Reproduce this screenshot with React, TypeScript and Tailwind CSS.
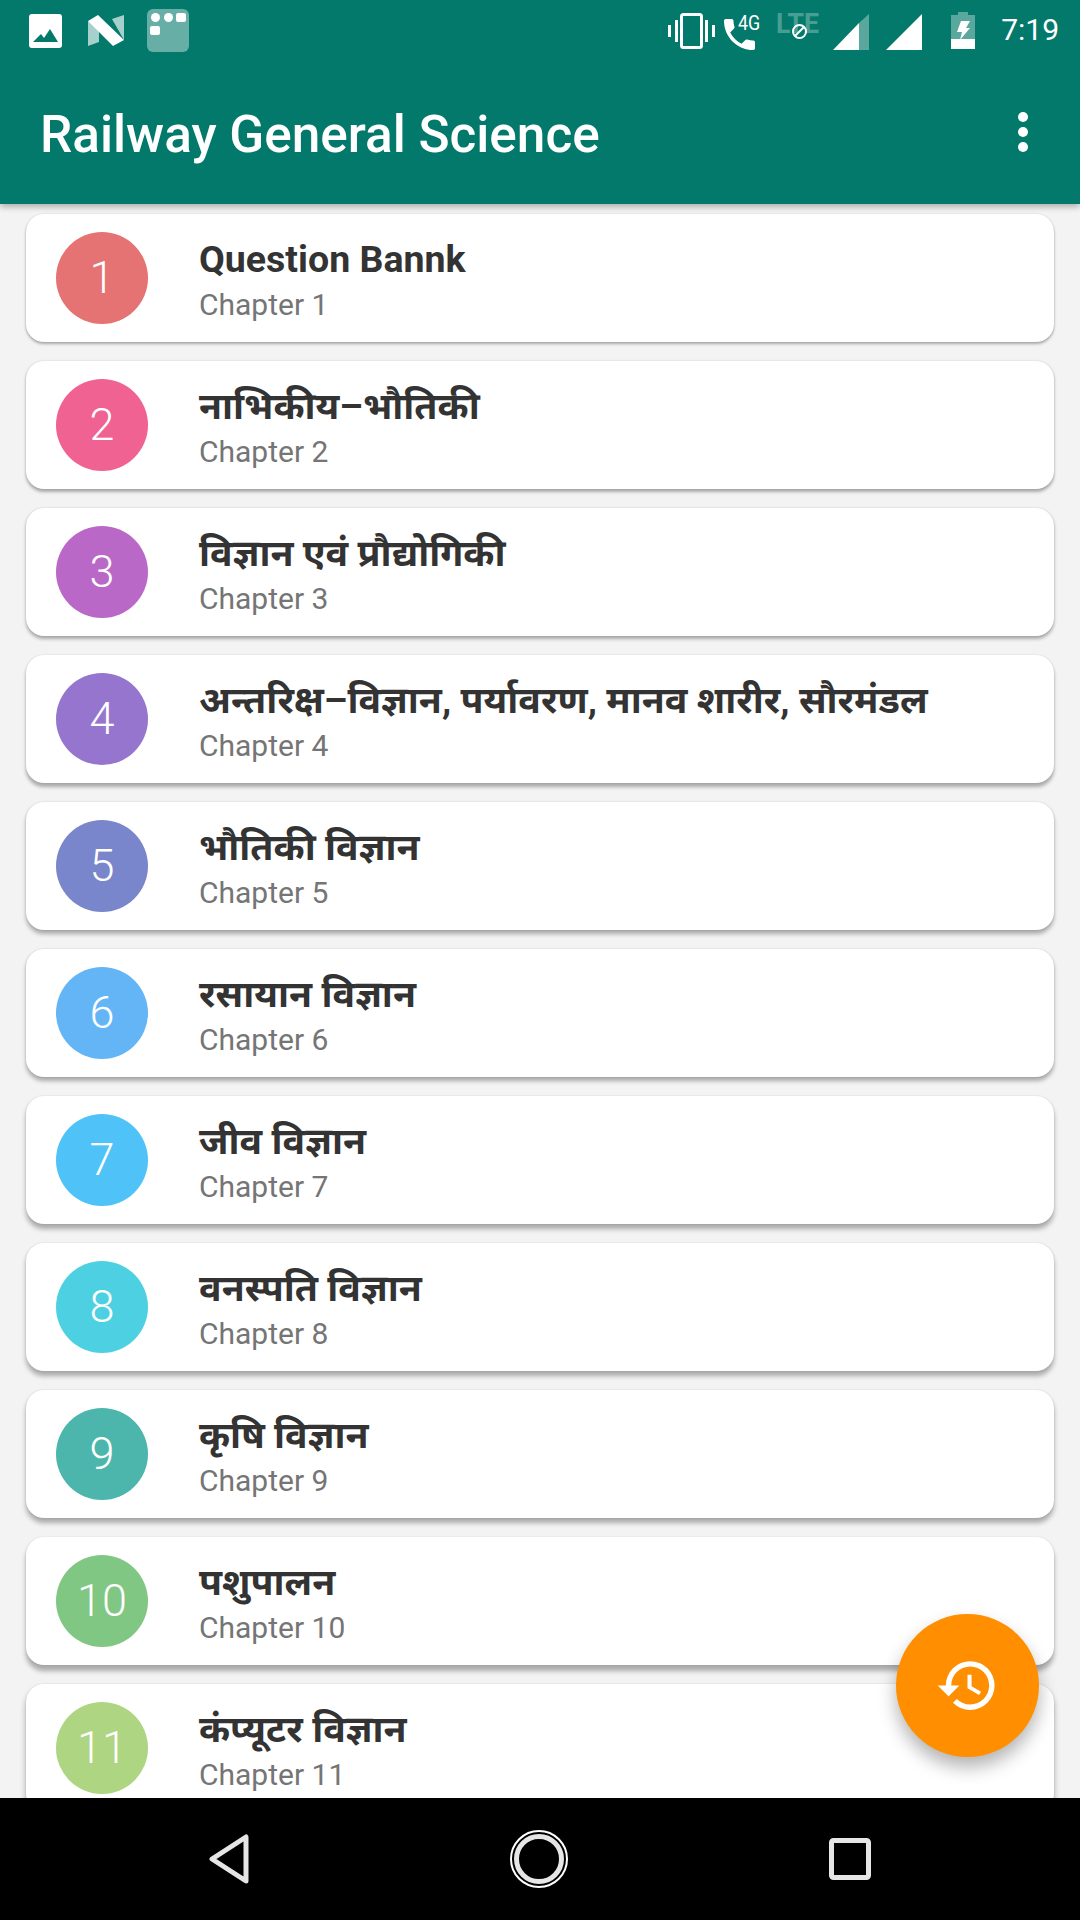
import React from 'react';
import { MdHistory } from 'react-icons/md';

const chapters = [
  { title: 'Question Bannk', color: 'bg-[#e57373]' },
  { title: 'नाभिकीय–भौतिकी', color: 'bg-[#f06292]' },
  { title: 'विज्ञान एवं प्रौद्योगिकी', color: 'bg-[#ba68c8]' },
  { title: 'अन्तरिक्ष–विज्ञान, पर्यावरण, मानव शारीर, सौरमंडल', color: 'bg-[#9575cd]' },
  { title: 'भौतिकी विज्ञान', color: 'bg-[#7986cb]' },
  { title: 'रसायान विज्ञान', color: 'bg-[#64b5f6]' },
  { title: 'जीव विज्ञान', color: 'bg-[#4fc3f7]' },
  { title: 'वनस्पति विज्ञान', color: 'bg-[#4dd0e1]' },
  { title: 'कृषि विज्ञान', color: 'bg-[#4db6ac]' },
  { title: 'पशुपालन', color: 'bg-[#81c784]' },
  { title: 'कंप्यूटर विज्ञान', color: 'bg-[#aed581]' },
];

const StatusBar = () => (
  <div className="flex h-[75px] items-start text-white">
    {/* notification icons */}
    <div className="flex items-start pl-[29px] pt-[9px]">
      <svg width="33" height="34" viewBox="0 0 33 34" className="mt-[5px]">
        <path fillRule="evenodd" fill="#fff" d="M3 0h27a3 3 0 0 1 3 3v28a3 3 0 0 1-3 3H3a3 3 0 0 1-3-3V3a3 3 0 0 1 3-3zM4 28h25l-8-13-6 9-3-4z" />
      </svg>
      <svg width="36" height="31" viewBox="0 0 36 31" className="ml-[26px] mt-[6px]">
        <path fill="#fff" fillOpacity="0.65" d="M0 6l11 6v15L0 31z" />
        <path fill="#fff" fillOpacity="0.65" d="M24 4l12-4v25z" />
        <path fill="#fff" d="M0 6L10 0l26 25-11 6z" />
      </svg>
      <div className="relative ml-[23px] h-[43px] w-[42px] rounded-[6px] bg-white/40">
        <span className="absolute left-[4px] top-[4px] h-[9px] w-[9px] rounded-full bg-white" />
        <span className="absolute left-[17px] top-[4px] h-[9px] w-[9px] rounded-full bg-white" />
        <span className="absolute right-[3px] top-[4px] h-[9px] w-[10px] rounded-[2px] bg-white" />
        <span className="absolute left-[3px] top-[17px] h-[9px] w-[10px] rounded-[2px] bg-white" />
      </div>
    </div>

    {/* system icons */}
    <div className="ml-auto flex items-start pr-[21px] pt-[12px]">
      <svg width="47" height="36" viewBox="0 0 47 36" className="mt-[1px]">
        <rect x="13.5" y="1.5" width="20" height="33" rx="2" fill="none" stroke="#fff" strokeWidth="3" />
        <path fill="#fff" d="M7 7h3v22H7zM37 7h3v22h-3zM0 12h3v12H0zM44 12h3v12h-3z" />
      </svg>
      <div className="relative ml-[9px] h-[38px] w-[38px]">
        <svg width="31" height="31" viewBox="4 3 18 18" className="absolute left-0 top-[7px]">
          <path fill="#fff" d="M21 15.5c-1.25 0-2.45-.2-3.57-.57-.35-.11-.74-.03-1.02.24l-2.2 2.2c-2.83-1.44-5.15-3.75-6.59-6.59l2.2-2.21c.28-.26.36-.65.25-1C9.7 6.45 9.5 5.25 9.5 4c0-.55-.45-1-1-1H5c-.55 0-1 .45-1 1 0 9.39 7.61 17 17 17 .55 0 1-.45 1-1v-3.5c0-.55-.45-1-1-1z" />
        </svg>
        <span className="absolute left-[14px] top-0 origin-left text-[21px] leading-[22px] [font-family:Roboto,sans-serif] [transform:scaleX(0.85)]">4G</span>
      </div>
      <div className="relative ml-[14px] h-[24px] w-[44px]">
        <span className="absolute left-0 top-0 origin-left text-[28px] font-bold leading-[24px] text-white/30 [font-family:Roboto,sans-serif] [transform:scaleX(0.95)]">LTE</span>
        <svg width="17" height="17" viewBox="0 0 17 17" className="absolute left-[15px] top-[11px]">
          <circle cx="8.5" cy="8.5" r="6.5" fill="none" stroke="#fff" strokeWidth="2" />
          <path d="M4 13L13 4" stroke="#fff" strokeWidth="2" />
        </svg>
      </div>
      <svg width="36" height="36" viewBox="0 0 36 36" className="ml-[13px] mt-[2px]">
        <path fill="#fff" fillOpacity="0.35" d="M36 0v36H26V9z" />
        <path fill="#fff" d="M0 36L26 9v27z" />
      </svg>
      <svg width="36" height="36" viewBox="0 0 36 36" className="ml-[17px] mt-[2px]">
        <path fill="#fff" d="M0 36L36 0v36z" />
      </svg>
      <svg width="24" height="37" viewBox="0 0 24 37" className="ml-[29px]">
        <path fill="#fff" fillOpacity="0.35" d="M7 0h10v3h7v25H0V3h7z" />
        <path fill="#fff" d="M0 27h24v10H0zM10 9h9l-4 7h4L9 28l2-8H6z" />
      </svg>
      <span className="ml-[26px] text-[30px] leading-[36px] [font-family:Roboto,sans-serif]">7:19</span>
    </div>
  </div>
);

const Toolbar = () => (
  <div className="flex h-[129px] items-center pb-[10px] pl-[40px] pr-[52px] text-white">
    <h1 className="flex-1 text-[51.3px] font-medium leading-none [font-family:Roboto,sans-serif]">Railway General Science</h1>
    <div className="mb-[5px] flex flex-col gap-[5px]">
      <span className="h-[10px] w-[10px] rounded-full bg-white" />
      <span className="h-[10px] w-[10px] rounded-full bg-white" />
      <span className="h-[10px] w-[10px] rounded-full bg-white" />
    </div>
  </div>
);

const ChapterCard = ({ index, title, color }: { index: number; title: string; color: string }) => (
  <div
    className="flex h-[128px] shrink-0 items-center rounded-[18px] bg-white pl-[30px]"
    style={{ boxShadow: `0 ${2 + index * 0.35}px ${3 + index * 0.3}px rgba(0,0,0,0.3), 0 0 2px rgba(0,0,0,0.12)` }}
  >
    <div className={`flex h-[92px] w-[92px] shrink-0 items-center justify-center rounded-full text-[45px] font-light text-white ${color}`}>
      {index + 1}
    </div>
    <div className="ml-[51px] flex flex-col pt-[2px]">
      <div className="text-[37.5px] font-bold leading-[46px] text-[#333333]">{title}</div>
      <div className="mt-[5px] text-[30px] leading-[36px] text-[#757575]">Chapter {index + 1}</div>
    </div>
  </div>
);

const NavBar = () => (
  <div className="flex h-[122px] shrink-0 items-center bg-black">
    <div className="flex w-full items-center justify-center">
      <svg width="40" height="50" viewBox="0 0 40 50" className="mr-[261px]">
        <path d="M37 3v44L3 25z" fill="none" stroke="#e6e6e6" strokeWidth="5" strokeLinejoin="round" />
      </svg>
      <svg width="58" height="58" viewBox="0 0 58 58">
        <circle cx="29" cy="29" r="28" fill="none" stroke="#fff" strokeWidth="2" />
        <circle cx="29" cy="29" r="22.5" fill="none" stroke="#e6e6e6" strokeWidth="5" />
      </svg>
      <svg width="42" height="42" viewBox="0 0 42 42" className="ml-[261px]">
        <rect x="2.5" y="2.5" width="37" height="37" rx="2" fill="none" stroke="#e6e6e6" strokeWidth="5" />
      </svg>
    </div>
  </div>
);

export default function App() {
  return (
    <div className="relative flex h-[1920px] w-[1080px] flex-col overflow-hidden bg-[#f3f3f3] [font-family:Roboto,'Noto_Sans','Noto_Sans_Devanagari',sans-serif]">
      <header className="relative z-10 h-[204px] shrink-0 bg-[#02796b] shadow-[0_3px_6px_rgba(0,0,0,0.28)]">
        <StatusBar />
        <Toolbar />
      </header>

      <main className="flex min-h-0 flex-1 flex-col gap-[19px] overflow-hidden px-[26px] pt-[10px]">
        {chapters.map((c, i) => (
          <ChapterCard key={i} index={i} title={c.title} color={c.color} />
        ))}
      </main>

      <NavBar />

      <button className="absolute left-[896px] top-[1614px] flex h-[143px] w-[143px] items-center justify-center rounded-full bg-[#ff8f00] shadow-[0_10px_18px_rgba(0,0,0,0.3)]">
        <MdHistory size={65} color="#fff" />
      </button>
    </div>
  );
}
